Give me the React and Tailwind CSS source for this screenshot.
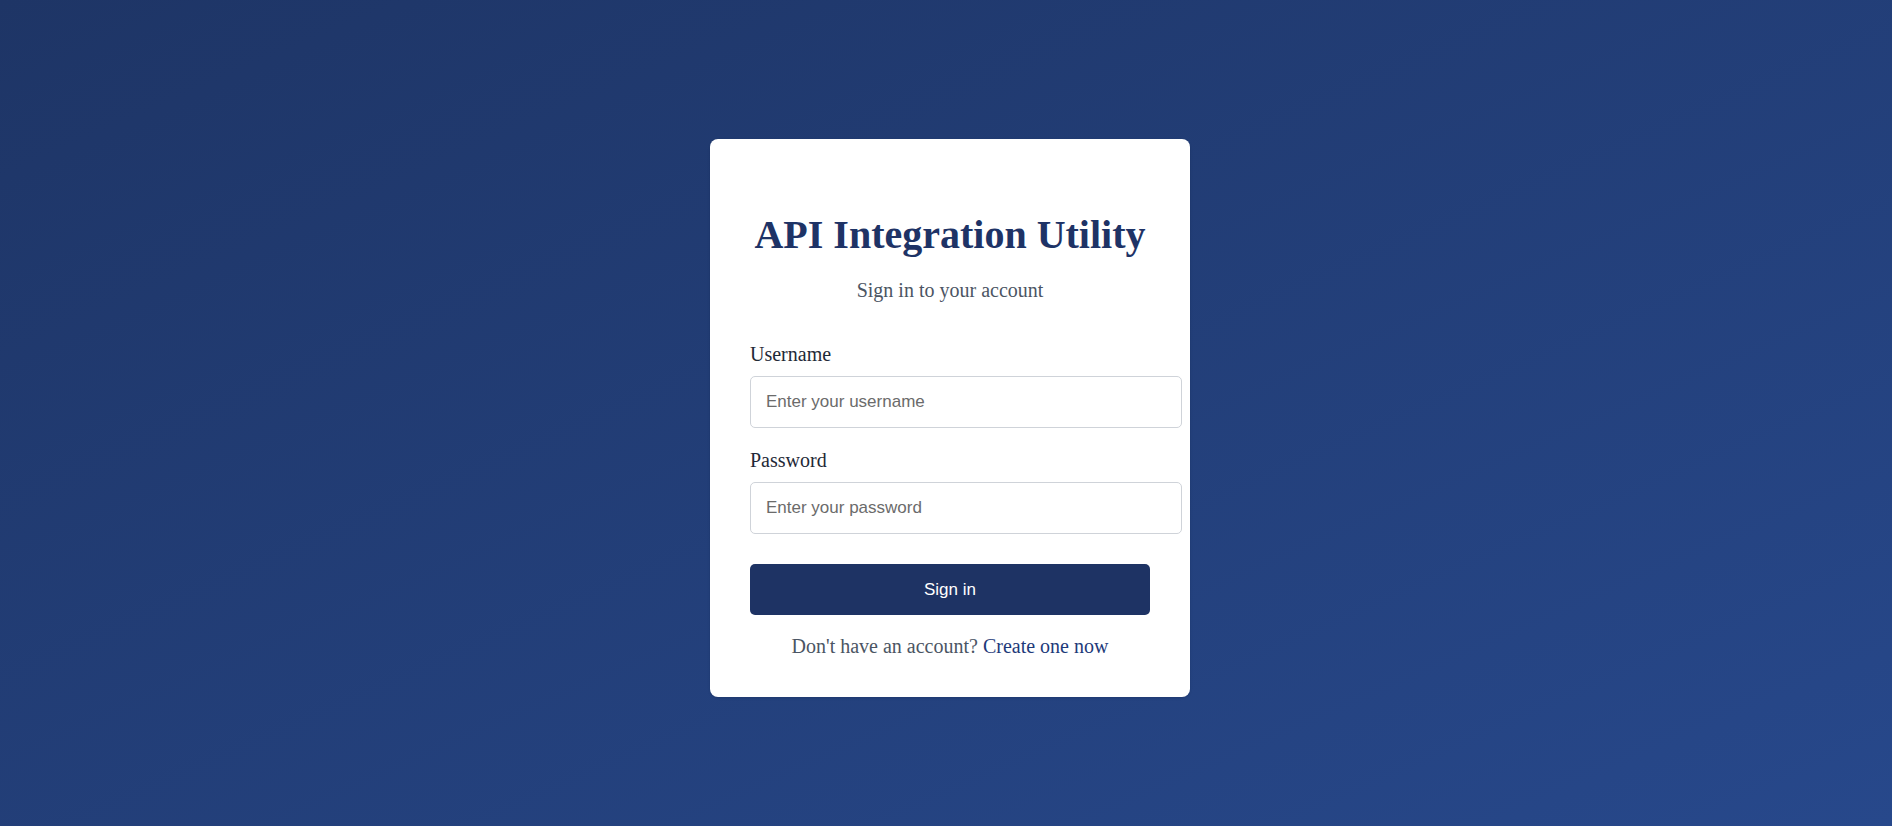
import React from "react";

export default function App() {
  return (
    <div className="w-full h-[826px] flex items-start justify-center pl-2 bg-gradient-to-br from-[#1e3566] to-[#27488b] font-['Liberation_Serif',serif]">
      <div className="mt-[139px] w-[480px] bg-white rounded-lg shadow-sm px-10 pt-[73px] pb-[39px]">
        <h1 className="text-[40px] leading-[46px] font-bold text-center text-[#1e3366]">
          API Integration Utility
        </h1>
        <p className="mt-[20px] text-[20px] leading-6 text-center text-[#4b5563]">
          Sign in to your account
        </p>

        <form className="mt-[40px] flex flex-col" onSubmit={(e) => e.preventDefault()}>
          <label className="text-[20px] leading-6 text-[#1f2937] mb-[10px]">Username</label>
          <input
            type="text"
            placeholder="Enter your username"
            className="w-[432px] h-[52px] px-[15px] border border-[#cfd3d9] rounded-[5px] font-['Liberation_Sans',Arial,sans-serif] text-[17px] text-[#1f2937] placeholder:text-[#6b6b6b] outline-none"
          />

          <label className="mt-[20px] text-[20px] leading-6 text-[#1f2937] mb-[10px]">Password</label>
          <input
            type="password"
            placeholder="Enter your password"
            className="w-[432px] h-[52px] px-[15px] border border-[#cfd3d9] rounded-[5px] font-['Liberation_Sans',Arial,sans-serif] text-[17px] text-[#1f2937] placeholder:text-[#6b6b6b] outline-none"
          />

          <button
            type="submit"
            className="mt-[30px] w-full h-[51px] rounded-[5px] bg-[#1e3364] text-white font-['Liberation_Sans',Arial,sans-serif] text-[17px]"
          >
            Sign in
          </button>
        </form>

        <p className="mt-[19px] text-[20px] leading-6 text-center text-[#4b5563]">
          Don't have an account?{" "}
          <a href="#" className="text-[#1e3a7a]">Create one now</a>
        </p>
      </div>
    </div>
  );
}
